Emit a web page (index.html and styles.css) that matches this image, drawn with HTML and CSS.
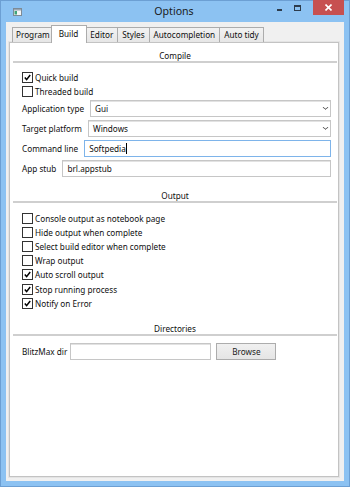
FILE: index.html
```html
<!DOCTYPE html>
<html>
<head>
    <meta charset="utf-8">
    <title>Options</title>
    <link rel="stylesheet" href="styles.css">
</head>
<body>
    <div class="window">
        <!-- title bar -->
        <div class="titlebar">
            <svg class="app-icon" width="9" height="8" viewBox="0 0 9 8">
                <rect x="0.5" y="0.5" width="8" height="7" fill="#f4f4f4" stroke="#7d8a96"/>
                <rect x="1" y="1" width="7" height="1.5" fill="#9aa7b3"/>
                <rect x="1.5" y="3" width="2.5" height="3.5" fill="#3fa37a"/>
            </svg>
            <div class="title">Options</div>
            <div class="controls">
                <div class="ctl ctl-min"><span></span></div>
                <div class="ctl ctl-max"><span></span></div>
                <div class="ctl ctl-close">
                    <svg width="7" height="7" viewBox="0 0 7 7">
                        <path d="M0.5 0.5 L6.5 6.5 M6.5 0.5 L0.5 6.5" stroke="#fff" stroke-width="1.6"/>
                    </svg>
                </div>
            </div>
        </div>

        <div class="client">
            <div class="tabs">
                <div class="tab">Program</div>
                <div class="tab active">Build</div>
                <div class="tab">Editor</div>
                <div class="tab">Styles</div>
                <div class="tab">Autocompletion</div>
                <div class="tab">Auto tidy</div>
            </div>

            <div class="panel">
                <div class="section-title">Compile</div>
                <div class="checks checks-compile">
                    <label class="check"><span class="box"><svg viewBox="0 0 9 9"><path d="M1.8 4.6 L3.6 6.6 L7.2 2"/></svg></span>Quick build</label>
                    <label class="check"><span class="box"></span>Threaded build</label>
                </div>
                <div class="fields">
                    <div class="field">
                        <span class="field-label">Application type</span>
                        <div class="input select">Gui<span class="arrow"></span></div>
                    </div>
                    <div class="field">
                        <span class="field-label">Target platform</span>
                        <div class="input select">Windows<span class="arrow"></span></div>
                    </div>
                    <div class="field">
                        <span class="field-label">Command line</span>
                        <div class="input focused">Softpedia<span class="caret"></span></div>
                    </div>
                    <div class="field">
                        <span class="field-label">App stub</span>
                        <div class="input">brl.appstub</div>
                    </div>
                </div>

                <div class="section-title">Output</div>
                <div class="checks checks-output">
                    <label class="check"><span class="box"></span>Console output as notebook page</label>
                    <label class="check"><span class="box"></span>Hide output when complete</label>
                    <label class="check"><span class="box"></span>Select build editor when complete</label>
                    <label class="check"><span class="box"></span>Wrap output</label>
                    <label class="check"><span class="box"><svg viewBox="0 0 9 9"><path d="M1.8 4.6 L3.6 6.6 L7.2 2"/></svg></span>Auto scroll output</label>
                    <label class="check"><span class="box"><svg viewBox="0 0 9 9"><path d="M1.8 4.6 L3.6 6.6 L7.2 2"/></svg></span>Stop running process</label>
                    <label class="check"><span class="box"><svg viewBox="0 0 9 9"><path d="M1.8 4.6 L3.6 6.6 L7.2 2"/></svg></span>Notify on Error</label>
                </div>

                <div class="section-title">Directories</div>
                <div class="dir-row">
                    <span class="field-label">BlitzMax dir</span>
                    <div class="input dir-input"></div>
                    <button class="btn">Browse</button>
                </div>
            </div>
        </div>
    </div>
</body>
</html>
```

FILE: styles.css
```css
* {
    box-sizing: border-box;
}

body {
    margin: 0;
    font-family: "Noto Sans", "Open Sans", sans-serif;
    font-size: 8.2px;
    color: #0f0f0f;
}

.window {
    width: 350px;
    height: 487px;
    display: flex;
    flex-direction: column;
    background: #8cc2f2;
    border: 1px solid #6c9fd3;
    padding: 0 5px 5px 5px;
}

.titlebar {
    height: 21px;
    position: relative;
    flex-shrink: 0;
}

.app-icon {
    position: absolute;
    left: 7px;
    top: 7px;
}

.title {
    text-align: center;
    font-size: 10.6px;
    line-height: 21px;
    color: #1a1a1a;
    padding-right: 2px;
}

.controls {
    position: absolute;
    right: -5px;
    top: -1px;
    display: flex;
    align-items: flex-start;
}

.ctl {
    height: 15px;
    display: flex;
    align-items: center;
    justify-content: center;
}

.ctl-min {
    width: 18px;
}

.ctl-min span {
    width: 5px;
    height: 2px;
    margin-top: 5px;
    background: #2d3c4c;
}

.ctl-max {
    width: 19px;
}

.ctl-max span {
    width: 7px;
    height: 6px;
    border: 1px solid #2d3c4c;
    border-top-width: 2px;
}

.ctl-close {
    width: 31px;
    margin-left: 6px;
    margin-right: 5px;
    background: #c75050;
}

/* client area */
.client {
    flex: 1;
    display: flex;
    flex-direction: column;
    background: #f0f0f0;
    padding: 3px 5px 4px 3px;
}

.tabs {
    display: flex;
    align-items: flex-end;
    height: 17px;
    padding-left: 3px;
    position: relative;
    z-index: 1;
}

.tab {
    height: 15px;
    line-height: 14px;
    padding: 0 4px;
    border: 1px solid #acacac;
    border-bottom: none;
    margin-right: -1px;
    background: linear-gradient(#f2f2f2, #e6e6e6);
    white-space: nowrap;
}

.tab:first-child {
    padding: 0 3px;
}

.tab.active {
    height: 18px;
    line-height: 15px;
    margin: 0 -2px -1px -2px;
    padding: 0 8px 0 7px;
    background: #fff;
    position: relative;
    z-index: 2;
}

.panel {
    flex: 1;
    background: #fff;
    border: 1px solid #c3c3c3;
    box-shadow: 0 0 0 1px #e4e4e4;
    padding: 7px 7px 0 0;
}

.section-title {
    margin: 0 -6px 0 3px;
    text-align: center;
    line-height: 11px;
    border-bottom: 2px solid #cfcfcf;
}

.checks {
    padding-left: 12px;
    margin-top: 7px;
}

.checks-output {
    margin-top: 8px;
    margin-bottom: 13px;
}

.check {
    display: flex;
    align-items: center;
    gap: 2px;
    height: 14px;
}

.checks-output .check {
    height: 14.2px;
}

.box {
    width: 11px;
    height: 11px;
    border: 1px solid #333;
    background: #fff;
    flex-shrink: 0;
    display: flex;
}

.box svg {
    width: 9px;
    height: 9px;
    fill: none;
    stroke: #000;
    stroke-width: 1.5;
}

.fields {
    padding-left: 12px;
    margin-top: 2px;
    margin-bottom: 13px;
    display: flex;
    flex-direction: column;
    gap: 3px;
}

.field {
    display: flex;
    align-items: center;
    gap: 6px;
    height: 17px;
}

.field-label {
    white-space: nowrap;
}

.input {
    flex: 1;
    height: 17px;
    border: 1px solid #c6c6c6;
    box-shadow: inset 0 1px 0 #e2e2e2;
    line-height: 15px;
    padding-left: 4px;
    position: relative;
    background: #fff;
}

.input.focused {
    border-color: #7eb4ea;
    box-shadow: none;
}

.caret {
    display: inline-block;
    width: 1px;
    height: 11px;
    background: #000;
    vertical-align: -2px;
}

.arrow {
    position: absolute;
    right: 2px;
    top: 4px;
    width: 5px;
    height: 5px;
    border-right: 1.5px solid #333;
    border-bottom: 1.5px solid #333;
    transform: scale(0.8, 0.6) rotate(45deg);
}

.dir-row {
    display: flex;
    align-items: center;
    padding-left: 12px;
    margin-top: 7px;
    height: 17px;
}

.dir-input {
    flex: none;
    width: 141px;
    margin-left: 3px;
}

.btn {
    width: 60px;
    height: 17px;
    margin-left: 5px;
    padding: 0;
    border: 1px solid #acacac;
    background: linear-gradient(#f0f0f0, #e5e5e5);
    font-family: inherit;
    font-size: 8.2px;
    color: #1b1b1b;
}
```
